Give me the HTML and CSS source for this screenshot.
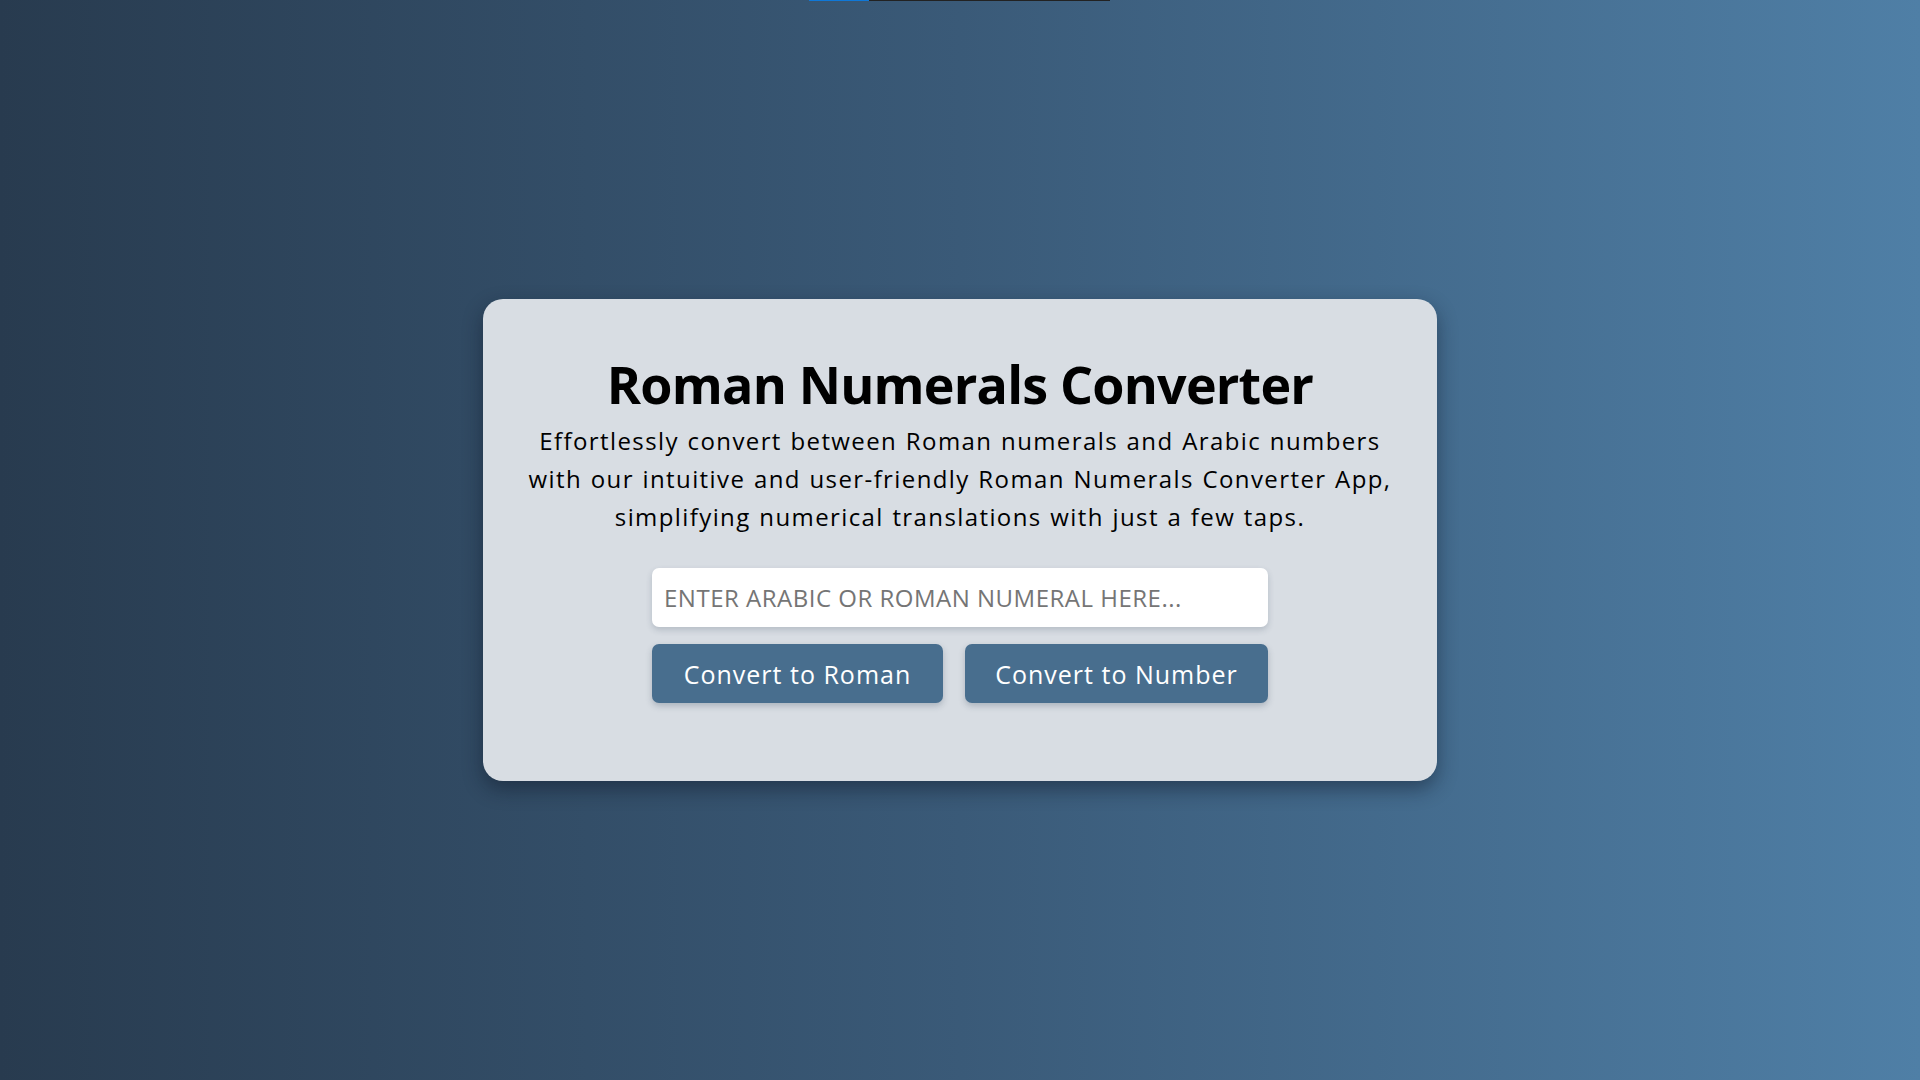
FILE: index.html
```html
<!DOCTYPE html>
<html lang="en">
<head>
<meta charset="utf-8">
<title>Roman Numerals Converter</title>
<link rel="stylesheet" href="styles.css">
</head>
<body>
<div class="topbar"><span class="topbar-fill"></span></div>
<main class="card">
  <h1 class="title">Roman Numerals Converter</h1>
  <p class="intro">Effortlessly convert between Roman numerals and Arabic numbers<br>with our intuitive and user-friendly Roman Numerals Converter App,<br>simplifying numerical translations with just a few taps.</p>
  <input class="field" type="text" placeholder="ENTER ARABIC OR ROMAN NUMERAL HERE...">
  <div class="actions">
    <button class="btn btn-roman" type="button">Convert to Roman</button>
    <button class="btn btn-number" type="button">Convert to Number</button>
  </div>
</main>
</body>
</html>
```
FILE: styles.css
```css
html, body {
  margin: 0;
  padding: 0;
}
body {
  height: 100vh;
  display: flex;
  align-items: center;
  justify-content: center;
  background: linear-gradient(to right, #283b4f 0%, #3a5a78 50%, #4f7fa6 100%);
  font-family: "Open Sans", "Noto Sans", sans-serif;
  overflow: hidden;
}
.topbar {
  position: absolute;
  top: 0;
  left: 809px;
  width: 301px;
  height: 1px;
  background: #222222;
  display: flex;
}
.topbar-fill {
  width: 60px;
  height: 100%;
  background: #0f78d8;
}
.card {
  width: 954px;
  box-sizing: border-box;
  padding: 55px 40px 78px;
  background: #d8dde3;
  border-radius: 20px;
  box-shadow: 0 8px 20px rgba(10, 20, 35, 0.45);
  display: flex;
  flex-direction: column;
  align-items: center;
}
.title {
  margin: 0;
  font-size: 52px;
  line-height: 60px;
  font-weight: 700;
  color: #000;
  letter-spacing: -0.8px;
}
.intro {
  margin: 8px 0 0;
  font-size: 24px;
  line-height: 38px;
  font-weight: 400;
  letter-spacing: 1.4px;
  word-spacing: 1px;
  color: #000;
  text-align: center;
  white-space: nowrap;
}
.field {
  margin-top: 32px;
  width: 616px;
  height: 59px;
  box-sizing: border-box;
  border: none;
  border-radius: 7px;
  background: #ffffff;
  padding: 0 12px;
  font-family: inherit;
  font-size: 24px;
  letter-spacing: 0.5px;
  color: #333;
  box-shadow: 0 3px 6px rgba(40, 60, 80, 0.2);
  outline: none;
}
.field::placeholder {
  color: #757575;
}
.actions {
  margin-top: 17px;
  width: 616px;
  display: flex;
  justify-content: space-between;
}
.btn {
  height: 59px;
  padding: 0;
  border: none;
  border-radius: 7px;
  background: #486e8e;
  color: #ffffff;
  font-family: inherit;
  font-size: 25px;
  font-weight: 500;
  letter-spacing: 1px;
  box-shadow: 0 3px 6px rgba(40, 60, 80, 0.25);
  cursor: pointer;
}
.btn-roman {
  width: 291px;
}
.btn-number {
  width: 303px;
}
```
